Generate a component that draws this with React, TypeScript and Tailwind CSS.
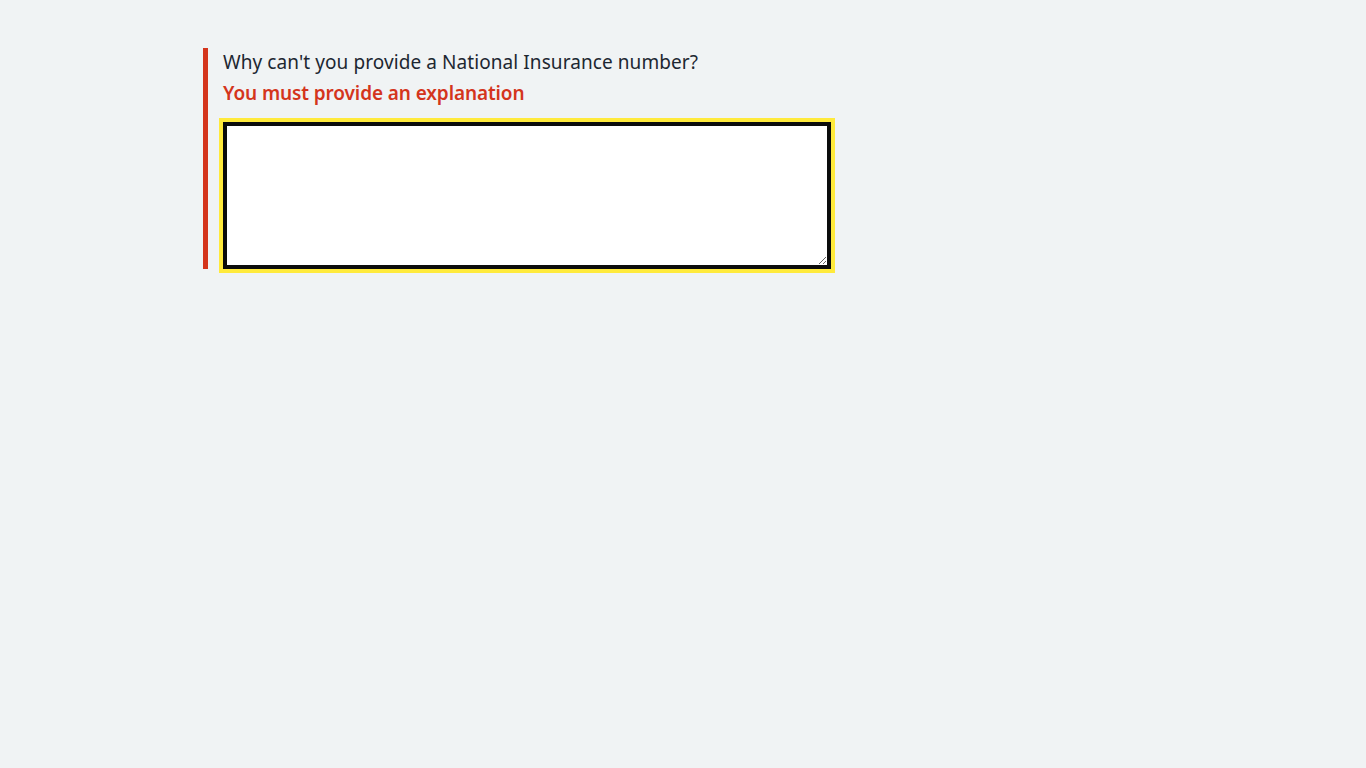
export default function App() {
  return (
    <div
      className="min-h-screen bg-[#f0f3f4] text-[#1d2731]"
      style={{ fontFamily: '"Noto Sans", "Open Sans", Arial, sans-serif' }}
    >
      <div className="mx-auto w-[960px] pt-12">
        <div className="border-l-[5px] border-[#d4351c] pl-[15px]">
          <label
            htmlFor="explanation"
            className="block pt-[2px] text-[19px] leading-[25px] tracking-[0.08px] mb-[6px]"
          >
            Why can't you provide a National Insurance number?
          </label>
          <p className="text-[19px] leading-[25px] font-semibold tracking-[-0.1px] text-[#d4351c] mb-[16px]">
            You must provide an explanation
          </p>
          <textarea
            id="explanation"
            autoFocus
            className="block w-[608px] h-[147px] bg-white border-4 border-[#0b0c0c] outline-4 outline-solid outline-[#ffea3b] focus:outline-4 focus:outline-solid focus:outline-[#ffea3b] outline-offset-0 resize p-[2px] text-[19px] caret-black"
          />
        </div>
      </div>
    </div>
  );
}
